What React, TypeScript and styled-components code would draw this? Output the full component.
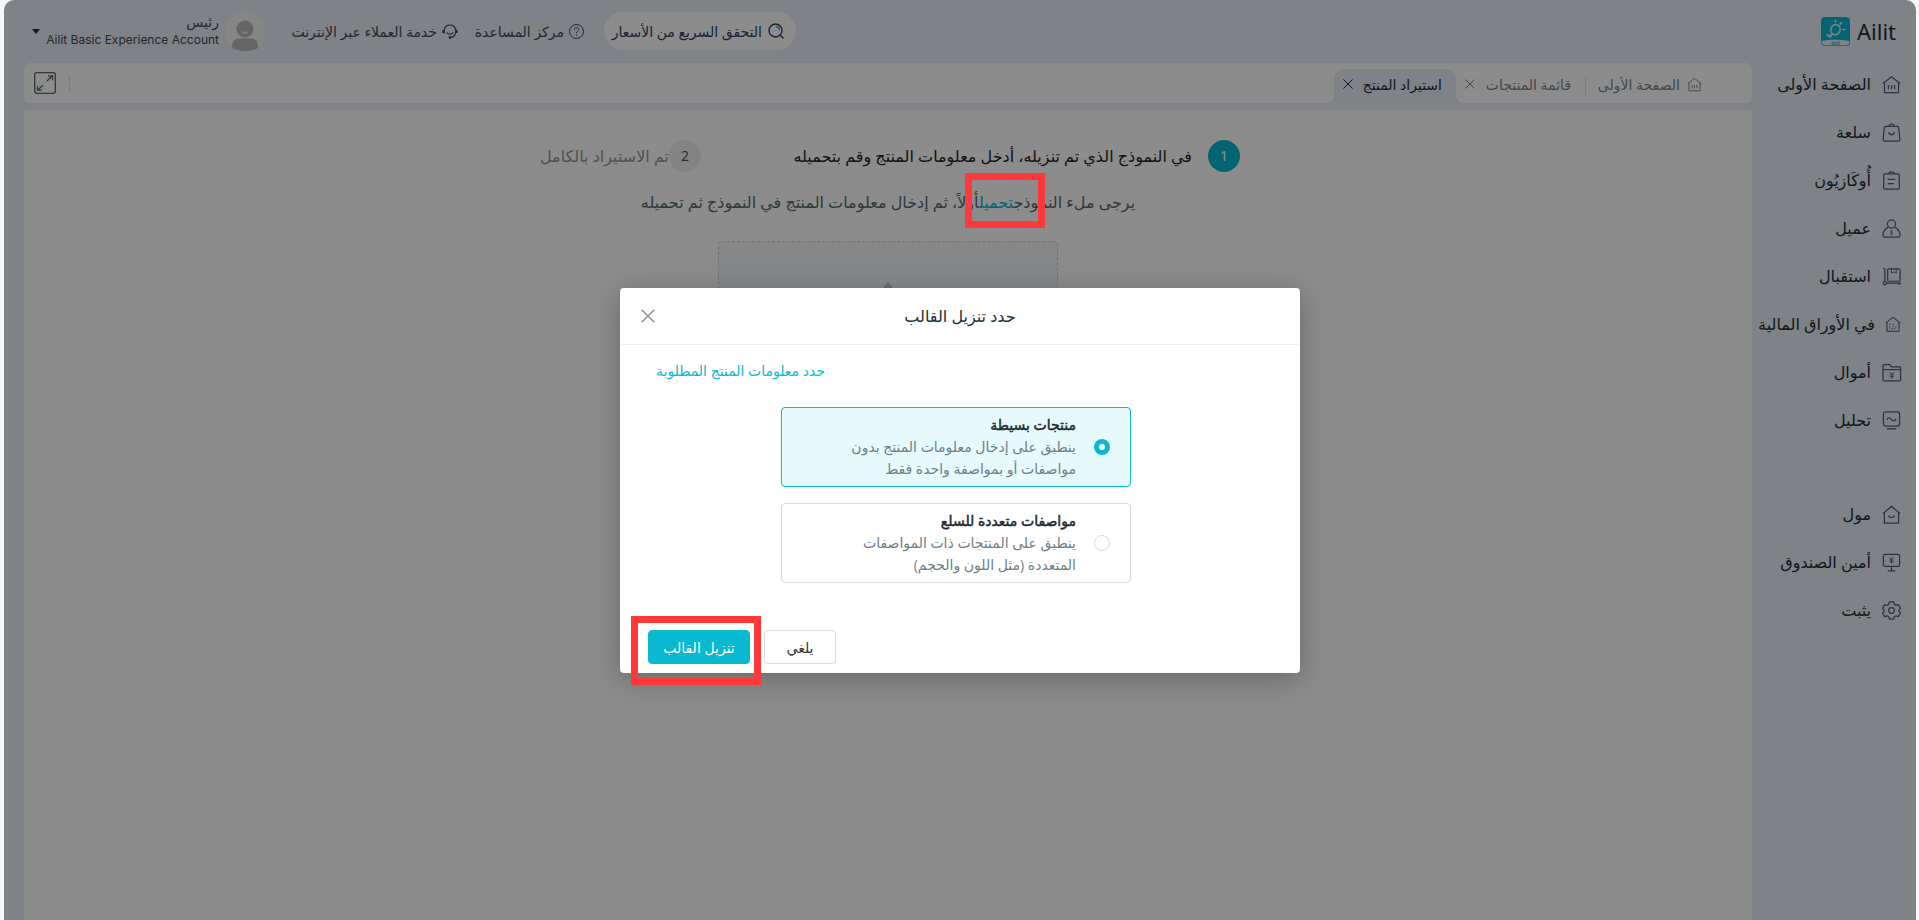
import React, { useState } from "react";
import styled, { createGlobalStyle } from "styled-components";

const teal = "#08b9cf";
const pageBg = "#e7edf4";

const Global = createGlobalStyle`
  * { box-sizing: border-box; }
  body { margin: 0; background: #f6f7fa; color: #1a3038; font-size: 14px;
    font-family: "Open Sans", "DejaVu Sans", sans-serif; }
  button { font: inherit; color: inherit; border: 0; background: none; padding: 0; cursor: pointer; }
  a { color: inherit; text-decoration: none; }
  p, h1, h2 { margin: 0; font-weight: 400; }
  svg { display: block; flex: none; overflow: visible; }
`;

const Frame = styled.div`
  position: relative;
  min-height: 100vh;
  margin: 0 3px 0 4px;
  display: flex;
  flex-direction: column;
  background: ${pageBg};
  border-radius: 10px 10px 0 0;
`;

const Header = styled.header`
  height: 60px;
  flex: none;
  display: flex;
  align-items: center;
  justify-content: space-between;
  padding: 2px 20px 0 28px;
`;

const Brand = styled.a`
  display: flex;
  align-items: center;
  gap: 7px;
  direction: ltr;
  font-family: "Noto Sans", sans-serif;
  font-size: 22px;
  line-height: 28px;
`;

const Tools = styled.div`
  display: flex;
  align-items: center;
`;

const PriceCheck = styled.button`
  width: 192px;
  height: 38px;
  border-radius: 19px;
  background: #fff;
  color: #2b3d66;
  display: flex;
  align-items: center;
  gap: 6px;
  padding: 0 12px 0 8px;
  white-space: nowrap;
`;

const ToolLink = styled.a<{ $w: number }>`
  width: ${(p) => p.$w}px;
  margin-right: 20px;
  display: flex;
  align-items: center;
  gap: 5px;
  color: #3c4c54;
  white-space: nowrap;
`;

const Account = styled.button`
  width: 233px;
  margin-right: 30px;
  display: flex;
  align-items: center;
  gap: 6px;
`;

const AccountName = styled.span`
  flex: 1;
  display: flex;
  flex-direction: column;
  text-align: right;
  white-space: nowrap;
  font-family: Inter, "DejaVu Sans", sans-serif;
  font-size: 12px;
  line-height: 18px;
  color: #3c4c54;
`;

const UserTitle = styled.span`
  font-size: 14px;
`;

const Body = styled.div`
  flex: 1;
  display: flex;
`;

const Sidebar = styled.nav`
  width: 164px;
  flex: none;
  display: flex;
  flex-direction: column;
`;

const NavItem = styled.a<{ $gapBefore?: boolean; $compact?: boolean }>`
  height: 48px;
  margin-top: ${(p) => (p.$gapBefore ? 46 : 0)}px;
  padding-right: 15px;
  display: flex;
  align-items: center;
  gap: ${(p) => (p.$compact ? 10 : 11)}px;
  font-size: 16px;
  white-space: nowrap;
  svg { width: ${(p) => (p.$compact ? 16 : 19)}px; height: ${(p) => (p.$compact ? 16 : 19)}px; color: #555b7d; }
`;

const Main = styled.main`
  flex: 1;
  min-width: 0;
  padding: 3px 0 0 20px;
  display: flex;
  flex-direction: column;
  gap: 7px;
`;

const TabBar = styled.div`
  height: 40px;
  flex: none;
  background: #fff;
  border-radius: 6px;
  display: flex;
  align-items: flex-end;
  padding: 0 36px 0 10px;
`;

const Tab = styled.div<{ $w: number; $active?: boolean }>`
  position: relative;
  width: ${(p) => p.$w}px;
  height: 34px;
  padding: 0 14px 4px 9px;
  display: flex;
  align-items: center;
  justify-content: space-between;
  white-space: nowrap;
  border-radius: 10px 10px 0 0;
  background: ${(p) => (p.$active ? pageBg : "none")};
  color: ${(p) => (p.$active ? "#1a3038" : "#7b8689")};
  &::before, &::after {
    content: ${(p) => (p.$active ? '""' : "none")};
    position: absolute;
    bottom: 0;
    width: 8px;
    height: 8px;
  }
  &::before { left: -8px; background: radial-gradient(circle at 0 0, #fff 8px, ${pageBg} 8px); }
  &::after { right: -8px; background: radial-gradient(circle at 100% 0, #fff 8px, ${pageBg} 8px); }
`;

const TabLink = styled.a`
  display: flex;
  align-items: center;
  gap: 7px;
`;

const Divider = styled.span<{ $h: number }>`
  width: 1px;
  height: ${(p) => p.$h}px;
  background: #dde1e8;
  margin-bottom: 6px;
`;

const TabTools = styled.div`
  margin-right: auto;
  align-self: center;
  display: flex;
  align-items: center;
  gap: 13px;
  color: #566a70;
  ${Divider} { margin: 0; }
`;

const Content = styled.section`
  flex: 1;
  background: #fff;
  border-radius: 2px 2px 0 0;
  padding-top: 30px;
  display: flex;
  flex-direction: column;
  align-items: center;
`;

const Steps = styled.div`
  width: 720px;
  padding-right: 8px;
  display: flex;
  justify-content: space-between;
  font-size: 16px;
  line-height: 32px;
  white-space: nowrap;
`;

const Step = styled.div<{ $active?: boolean }>`
  display: flex;
  gap: ${(p) => (p.$active ? 16 : 0)}px;
  width: ${(p) => (p.$active ? "auto" : "173px")};
  color: ${(p) => (p.$active ? "#262626" : "#909699")};
`;

const StepNumber = styled.span<{ $active?: boolean }>`
  width: 32px;
  height: 32px;
  flex: none;
  border-radius: 50%;
  text-align: center;
  font-family: "Noto Sans", sans-serif;
  font-size: 14px;
  background: ${(p) => (p.$active ? teal : "#f0f0f0")};
  color: ${(p) => (p.$active ? "#fff" : "#555")};
`;

const Hint = styled.p`
  margin-top: 18px;
  font-size: 16px;
  line-height: 24px;
  color: #566a70;
  white-space: nowrap;
`;

const HintLink = styled.a`
  position: relative;
  color: ${teal};
`;

const Marker = styled.span<{ $top: number; $left: number; $w: number; $h: number }>`
  position: absolute;
  z-index: 20;
  top: ${(p) => p.$top}px;
  left: ${(p) => p.$left}px;
  width: ${(p) => p.$w}px;
  height: ${(p) => p.$h}px;
  border: 7px solid #ff3939;
  pointer-events: none;
`;

const DropZone = styled.div`
  width: 340px;
  height: 180px;
  margin-top: 27px;
  border: 1px dashed #cfd3d8;
  border-radius: 4px;
  background: #f2f6fa;
  display: flex;
  justify-content: center;
  padding-top: 40px;
  color: #c4c6ca;
`;

const Overlay = styled.div`
  position: absolute;
  inset: 0;
  z-index: 10;
  border-radius: 10px 10px 0 0;
  background: rgba(0, 0, 0, 0.45);
  padding-top: 288px;
`;

const Dialog = styled.div`
  width: 680px;
  margin: 0 auto;
  background: #fff;
  border-radius: 4px;
  box-shadow: 0 6px 30px rgba(0, 0, 0, 0.25);
`;

const DialogHead = styled.div`
  height: 57px;
  display: flex;
  align-items: center;
  border-bottom: 1px solid #eef0f2;
  padding: 0 35px 0 21px;
  h2 { flex: 1; text-align: center; font-size: 16px; line-height: 24px; }
  button { color: #8c8c8c; }
`;

const DialogBody = styled.div`
  padding-top: 15px;
`;

const Caption = styled.p`
  padding-left: 36px;
  text-align: left;
  color: ${teal};
  line-height: 22px;
`;

const Choices = styled.div`
  width: 350px;
  margin: 25px 169px 0 auto;
  display: flex;
  flex-direction: column;
  gap: 16px;
`;

const Choice = styled.label<{ $on: boolean }>`
  height: 80px;
  display: flex;
  align-items: center;
  gap: 18px;
  padding: 0 20px;
  border: 1px solid ${(p) => (p.$on ? teal : "#d9d9dc")};
  border-radius: 4px;
  background: ${(p) => (p.$on ? "#e6f9fd" : "#fff")};
  line-height: 22px;
  color: #6f7f83;
  white-space: nowrap;
`;

const ChoiceTitle = styled.span`
  display: block;
  color: #1f2b30;
  -webkit-text-stroke: 0.5px #1f2b30;
`;

const Radio = styled.input`
  appearance: none;
  width: 16px;
  height: 16px;
  flex: none;
  margin: 0;
  border: 1px solid #d9d9d9;
  border-radius: 50%;
  background: #fff;
  &:checked { border: 5px solid ${teal}; }
`;

const DialogFoot = styled.div`
  margin-top: 47px;
  padding: 0 28px 9px;
  display: flex;
  justify-content: flex-end;
  gap: 14px;
`;

const Action = styled.button<{ $primary?: boolean }>`
  position: relative;
  width: ${(p) => (p.$primary ? 102 : 72)}px;
  height: 34px;
  border: 1px solid ${(p) => (p.$primary ? teal : "#d9d9dc")};
  border-radius: 4px;
  background: ${(p) => (p.$primary ? teal : "#fff")};
  color: ${(p) => (p.$primary ? "#fff" : "#333")};
  white-space: nowrap;
`;

const icons: Record<string, React.ReactNode> = {
  home: <path d="M1 9 10 1.800 19 9M2.600 8v10.500h14.800V8M6.800 10.500V15M10 10.500V15M13.200 10.500V15" />,
  bag: <><path d="M4 3.500h12a1.600 1.600 0 0 1 1.600 1.400l1.200 12.400a1.600 1.600 0 0 1-1.600 1.700H2.800a1.600 1.600 0 0 1-1.600-1.700L2.400 4.900A1.600 1.600 0 0 1 4 3.500Z" /><path d="M7.500 3.300c0-2.800 5-2.800 5 0M7 9.500c.6 3.600 5.400 3.600 6 0" /></>,
  orders: <><rect x="1.800" y="3" width="16.400" height="16" rx="1.500" /><path d="M7 3c0-2.800 6-2.800 6 0M6 8.800h8M6 13.300h6.500" /></>,
  person: <><circle cx="10" cy="5.300" r="4.300" /><path d="M6.500 8.800C3 10.500 1 13.500 1 17.200c0 1 .6 1.800 1.800 1.800h14.400c1.200 0 1.800-.8 1.800-1.800 0-3.700-2-6.700-5.500-8.400" /><path d="M10 11.500l-.8 4 .8 1.500.8-1.500Z" strokeWidth=".9" /></>,
  trolley: <><rect x="6" y="2" width="13" height="13" rx="1" /><path d="M10 2v4.500l2.500-1.300L15 6.500V2" strokeWidth=".9" /><path d="M1 1l2 1.200V15M4.500 17H20M18 17v2" /><circle cx="3" cy="17" r="1.700" /></>,
  stock: <><path d="M1 9 10 1.500 19 9M2.500 8v11h15V8" /><path d="M6 9.500v7M8 16h6M10 10v4M13.500 13v3" strokeDasharray="1.800 1.200" /></>,
  folder: <><path d="M1 5V3.200A1.400 1.400 0 0 1 2.400 1.800H8l2 2.400h8.600a1 1 0 0 1 1 1V17.300a1.400 1.400 0 0 1-1.400 1.400H2.400A1.400 1.400 0 0 1 1 17.300V5M1 7h18.600" /><path d="m8 9.500 2.300 2.500 2.300-2.500M10.300 12v4.500M8 12.500h4.600M8 14.500h4.600" strokeWidth=".9" /></>,
  chart: <><rect x="1.500" y="1" width="17" height="14.800" rx="2.500" /><path d="M5 9c2-3 4-2 5 0s3 2 5-.8M5 18.800h10" /></>,
  mall: <><path d="M1 9 10 1.500 19 9M2.500 8v11h15V8" /><path d="M7 11c.6 3.200 5.400 3.200 6 0" /></>,
  cashier: <><rect x="1.500" y="1.500" width="17" height="12.500" rx="1.500" /><path d="M10 14v4.500M6 18.800h8" /><path d="M7.800 4.300 10 6.800l2.200-2.500M10 6.800v4.400M7.800 7.300h4.400M7.800 9.300h4.400" strokeWidth=".9" /></>,
  gear: <><circle cx="10" cy="10" r="3" /><path d="M7.700 1h4.600l.6 2.600 1.800 1 2.500-.8 2.200 3.900-1.800 1.900v1l1.800 1.900-2.200 3.900-2.500-.8-1.800 1-.6 2.400H7.700l-.6-2.400-1.800-1-2.500.8-2.200-3.900 1.800-1.900v-1L.6 7.700l2.200-3.900 2.500.8 1.800-1Z" strokeLinejoin="round" /></>,
};

const Icon = ({ name, size = 19 }: { name: string; size?: number }) => (
  <svg width={size} height={size} viewBox="0 0 20 20" fill="none" stroke="currentColor" strokeWidth="1.300" aria-hidden="true">
    {icons[name]}
  </svg>
);

const Cross = ({ size }: { size: number }) => (
  <svg width={size} height={size} viewBox="0 0 10 10" fill="none" stroke="currentColor" strokeWidth="1">
    <path d="m.5.5 9 9M9.500.5l-9 9" />
  </svg>
);

const Logo = () => (
  <svg width="29" height="29" viewBox="0 0 29 29" aria-hidden="true">
    <rect width="29" height="29" rx="4" fill={teal} />
    <path d="M.7 24c8-1.600 19.600-1.600 27.600 0v1A3.500 3.500 0 0 1 25 28.300H4A3.500 3.500 0 0 1 .7 25Z" fill="#e8eef2" />
    <g fill="none" stroke="#e8eef2" strokeWidth="1.600" strokeLinecap="round">
      <ellipse cx="14.500" cy="12.700" rx="4.600" ry="5.100" transform="rotate(20 14.500 12.700)" />
      <path d="M11.500 16.500c-1 1.800-3 2.200-5 1.700 1 1.200 2.400 1.700 3.700 1.600M14.500 3.300v1.700M20.500 5.600l-1.300 1.700M23.800 12.500H22" />
    </g>
    <text x="14.500" y="28" textAnchor="middle" fontSize="5" fontWeight="700" direction="ltr" fill={teal}>intl</text>
  </svg>
);

const navItems = [
  ["home", "الصفحة الأولى"],
  ["bag", "سلعة"],
  ["orders", "أُوكَازيُون"],
  ["person", "عميل"],
  ["trolley", "استقبال"],
  ["stock", "في الأوراق المالية"],
  ["folder", "أموال"],
  ["chart", "تحليل"],
  ["mall", "مول"],
  ["cashier", "أمين الصندوق"],
  ["gear", "يثبت"],
];

const choices = [
  { id: "simple", title: "منتجات بسيطة", lines: ["ينطبق على إدخال معلومات المنتج بدون", "مواصفات أو بمواصفة واحدة فقط"] },
  { id: "multi", title: "مواصفات متعددة للسلع", lines: ["ينطبق على المنتجات ذات المواصفات", "المتعددة (مثل اللون والحجم)"] },
];

export default function App() {
  const [template, setTemplate] = useState("simple");
  return (
    <Frame dir="rtl" lang="ar">
      <Global />
      <Header>
        <Brand href="#"><Logo />Ailit</Brand>
        <Tools>
          <PriceCheck>
            <svg width="16" height="16" viewBox="0 0 16 16" fill="none" stroke="#2b3d66" strokeWidth="1.400">
              <circle cx="7.500" cy="7.500" r="6.500" /><path d="m12 12 3.500 3.500" />
              <path d="M8 3.500c2 .2 3.400 1.700 3.500 3.500" stroke={teal} />
            </svg>
            التحقق السريع من الأسعار
          </PriceCheck>
          <ToolLink href="#" $w={106}>
            <svg width="15" height="15" viewBox="0 0 15 15" fill="none" stroke="currentColor">
              <circle cx="7.500" cy="7.500" r="7" /><path d="M5.300 6c0-3 4.500-3 4.500-.3 0 1.600-2.300 1.600-2.300 3.300M7.500 10.500v1.200" />
            </svg>
            مركز المساعدة
          </ToolLink>
          <ToolLink href="#" $w={163}>
            <svg width="16" height="15" viewBox="0 0 16 15" fill="none" stroke="currentColor" strokeWidth="1.200">
              <path d="M2.500 9.500C1.200 4 4 1 8 1s6.800 3 5.500 8.500c-.7 2-2.500 3.800-5 4" />
              <path d="M1.200 6v3M14.800 6v3" strokeWidth="1.600" /><path d="M5 8.500c1 2.300 5 2.300 6 0" /><circle cx="8" cy="13.500" r=".8" />
            </svg>
            خدمة العملاء عبر الإنترنت
          </ToolLink>
          <Account>
            <svg width="40" height="40" viewBox="0 0 40 40">
              <circle cx="20" cy="20" r="20" fill="#f5f5f5" />
              <circle cx="20" cy="18" r="8.500" fill="#b8b8b8" />
              <path d="M7 37c0-6 2-9.500 7-9.500h12c5 0 7 3.500 7 9.500-8 4-18 4-26 0Z" fill="#b8b8b8" />
              <path d="M17.500 20.500c.5 2.500 4.500 2.500 5 0" fill="none" stroke="#f5f5f5" strokeWidth="1.300" />
            </svg>
            <AccountName>
              <UserTitle>رئيس</UserTitle>
              <span dir="ltr">Ailit Basic Experience Account</span>
            </AccountName>
            <svg width="8" height="5" viewBox="0 0 8 5"><path d="M0 0h8L4 5Z" fill="#1a3038" /></svg>
          </Account>
        </Tools>
      </Header>
      <Body>
        <Sidebar>
          {navItems.map(([icon, text]) => (
            <NavItem key={icon} href="#" $gapBefore={icon === "mall"} $compact={icon === "stock"}>
              <Icon name={icon} />{text}
            </NavItem>
          ))}
        </Sidebar>
        <Main>
          <TabBar>
            <Tab $w={130}><TabLink href="#"><Icon name="home" size={15} />الصفحة الأولى</TabLink></Tab>
            <Divider $h={20} />
            <Tab $w={129}>
              <TabLink href="#">قائمة المنتجات</TabLink>
              <button aria-label="إغلاق"><Cross size={10} /></button>
            </Tab>
            <Tab $w={122} $active>
              <TabLink href="#">استيراد المنتج</TabLink>
              <button aria-label="إغلاق"><Cross size={10} /></button>
            </Tab>
            <TabTools>
              <Divider $h={16} />
              <button aria-label="ملء الشاشة">
                <svg width="22" height="22" viewBox="0 0 22 22" fill="none" stroke="currentColor" strokeWidth="1.300">
                  <rect x=".7" y=".7" width="20.600" height="20.600" rx="2" />
                  <path d="m13 9 5.500-5.500M14 3.800h4.500v4.500M9 13l-5.500 5.500M8 18.200H3.500v-4.500" />
                </svg>
              </button>
            </TabTools>
          </TabBar>
          <Content>
            <Steps>
              <Step $active><StepNumber $active>1</StepNumber>في النموذج الذي تم تنزيله، أدخل معلومات المنتج وقم بتحميله</Step>
              <Step><StepNumber>2</StepNumber>تم الاستيراد بالكامل</Step>
            </Steps>
            <Hint>
              يرجى ملء النموذج
              <HintLink href="#">تحميل<Marker $top={-18} $left={-14} $w={80} $h={55} /></HintLink>
              أولاً، ثم إدخال معلومات المنتج في النموذج ثم تحميله
            </Hint>
            <DropZone>
              <svg width="48" height="48" viewBox="0 0 48 48"><path d="M24 0 48 28H34v20H14V28H0Z" fill="currentColor" /></svg>
            </DropZone>
          </Content>
        </Main>
      </Body>
      <Overlay>
        <Dialog role="dialog" aria-labelledby="dialog-title">
          <DialogHead>
            <h2 id="dialog-title">حدد تنزيل القالب</h2>
            <button aria-label="إغلاق"><Cross size={14} /></button>
          </DialogHead>
          <DialogBody>
            <Caption>حدد معلومات المنتج المطلوبة</Caption>
            <Choices>
              {choices.map((c) => (
                <Choice key={c.id} $on={template === c.id}>
                  <Radio type="radio" name="template" checked={template === c.id} onChange={() => setTemplate(c.id)} />
                  <span><ChoiceTitle>{c.title}</ChoiceTitle>{c.lines[0]}<br />{c.lines[1]}</span>
                </Choice>
              ))}
            </Choices>
          </DialogBody>
          <DialogFoot>
            <Action>يلغي</Action>
            <Action $primary>تنزيل القالب<Marker $top={-15} $left={-18} $w={130} $h={69} /></Action>
          </DialogFoot>
        </Dialog>
      </Overlay>
    </Frame>
  );
}
